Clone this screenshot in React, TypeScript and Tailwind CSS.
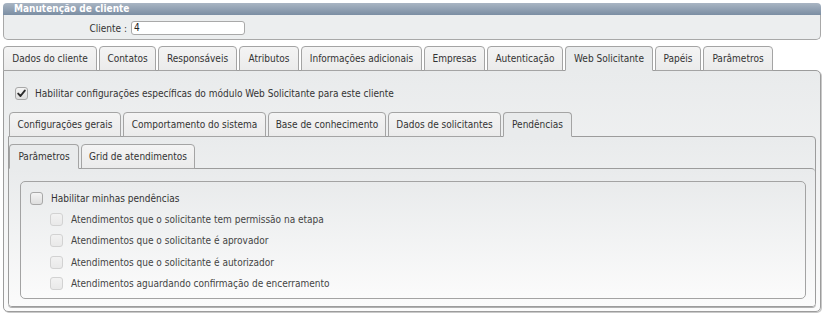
import clsx from "clsx";

const outerTabs = [
  { label: "Dados do cliente", w: "w-[94px]" },
  { label: "Contatos", w: "w-[57px]" },
  { label: "Responsáveis", w: "w-[79px]" },
  { label: "Atributos", w: "w-[60px]" },
  { label: "Informações adicionais", w: "w-[121px]" },
  { label: "Empresas", w: "w-[61px]" },
  { label: "Autenticação", w: "w-[76px]" },
  { label: "Web Solicitante", w: "w-[88px]", active: true },
  { label: "Papéis", w: "w-[46px]" },
  { label: "Parâmetros", w: "w-[70px]" },
];

const webTabs = [
  { label: "Configurações gerais", w: "w-[112px]" },
  { label: "Comportamento do sistema", w: "w-[143px]" },
  { label: "Base de conhecimento", w: "w-[118px]" },
  { label: "Dados de solicitantes", w: "w-[113px]" },
  { label: "Pendências", w: "w-[69px]", active: true },
];

const pendTabs = [
  { label: "Parâmetros", w: "w-[70px]", active: true },
  { label: "Grid de atendimentos", w: "w-[114px]" },
];

const subOptions = [
  "Atendimentos que o solicitante tem permissão na etapa",
  "Atendimentos que o solicitante é aprovador",
  "Atendimentos que o solicitante é autorizador",
  "Atendimentos aguardando confirmação de encerramento",
];

type TabItem = { label: string; w: string; active?: boolean };

function TabRow({ tabs, className }: { tabs: TabItem[]; className?: string }) {
  return (
    <div className={clsx("relative z-10 -mb-px flex items-end gap-[2px]", className)}>
      {tabs.map((t) => (
        <div
          key={t.label}
          className={clsx(
            "flex h-[25px] items-center justify-center whitespace-nowrap rounded-t-[4px] border border-[#a4a4a4] pb-px text-[#333]",
            t.w,
            t.active ? "border-b-[#e9ebec] bg-[#e9ebec]" : "bg-linear-to-b from-[#f4f4f4] to-[#ebebeb]"
          )}
        >
          {t.label}
        </div>
      ))}
    </div>
  );
}

function Check({ checked, disabled }: { checked?: boolean; disabled?: boolean }) {
  return (
    <span
      className={clsx(
        "flex h-[13px] w-[13px] shrink-0 items-center justify-center rounded-[3px] border",
        disabled
          ? "border-[#d2d2d2] bg-linear-to-b from-[#f2f2f2] to-[#e9e9e9]"
          : "border-[#a8a8a8] bg-linear-to-b from-[#f4f4f4] to-[#dedede]"
      )}
    >
      {checked && (
        <svg width="9" height="9" viewBox="0 0 9 9">
          <path d="M1.2 4.6 L3.5 7 L7.8 1.6" fill="none" stroke="#2b2b2b" strokeWidth="1.9" strokeLinecap="round" strokeLinejoin="round" />
        </svg>
      )}
    </span>
  );
}

export default function App() {
  return (
    <div className="flex h-[316px] w-[824px] flex-col bg-white px-[3px] pb-[4px] pt-[3px] text-[10px] leading-[13px] text-[#333] [font-family:'DejaVu_Sans_Condensed','Liberation_Sans',Arial,sans-serif]">
      {/* cabeçalho */}
      <div className="h-[12px] rounded-t-[4px] bg-linear-to-b from-[#a9b5c3] to-[#7b8ea3] pl-[11px] text-[10px] font-bold leading-[12px] text-white">
        Manutenção de cliente
      </div>
      <div className="flex h-[25px] items-start rounded-b-[5px] border border-t-0 border-[#a8a8a8] bg-[#eceeef] pt-[6px]">
        <span className="w-[123px] pt-px text-right">Cliente :</span>
        <div className="ml-[4px] h-[14px] w-[114px] rounded-[3px] border border-[#a9a9a9] bg-white pl-[2px] leading-[12px] text-[#222]">
          4
        </div>
      </div>

      <TabRow tabs={outerTabs} className="mt-[6px]" />
      <div className="flex flex-1 flex-col rounded-b-[5px] rounded-tr-[5px] border border-[#9c9c9c] bg-linear-to-b from-[#e9ebec] to-[#fbfbfb] px-[4px] pb-[4px] pt-[16px] shadow-[1px_1px_0_#c9c9c9]">
        <label className="ml-[7px] flex h-[13px] items-center gap-[7px]">
          <Check checked />
          <span className="text-[#333]">Habilitar configurações específicas do módulo Web Solicitante para este cliente</span>
        </label>

        <TabRow tabs={webTabs} className="ml-px mt-[12px]" />
        <div className="flex flex-1 flex-col rounded-b-[4px] rounded-tr-[4px] border border-[#9c9c9c] bg-linear-to-b from-[#e9ebec] to-[#fbfbfb] pt-[7px] shadow-[0_1px_0_#b0b0b0]">
          <TabRow tabs={pendTabs} className="ml-0" />
          <div className="flex flex-1 flex-col rounded-b-[3px] rounded-tr-[4px] border-t border-[#9c9c9c] bg-linear-to-b from-[#e9ebec] to-[#fbfbfb] pb-[7px] pl-[11px] pr-[9px] pt-[12px]">
            <div className="flex flex-1 flex-col rounded-[5px] border border-[#a3a3a3] bg-linear-to-b from-[#e9ebec] to-[#fbfbfb] pl-[9px] pt-[10px]">
              <label className="flex h-[13px] items-center gap-[8px]">
                <Check />
                <span>Habilitar minhas pendências</span>
              </label>
              <div className="mt-[8px] flex flex-col gap-[8.3px] pl-[20px]">
                {subOptions.map((o) => (
                  <label key={o} className="flex h-[13px] items-center gap-[8px]">
                    <Check disabled />
                    <span className="text-[#444]">{o}</span>
                  </label>
                ))}
              </div>
            </div>
          </div>
        </div>
      </div>
    </div>
  );
}
